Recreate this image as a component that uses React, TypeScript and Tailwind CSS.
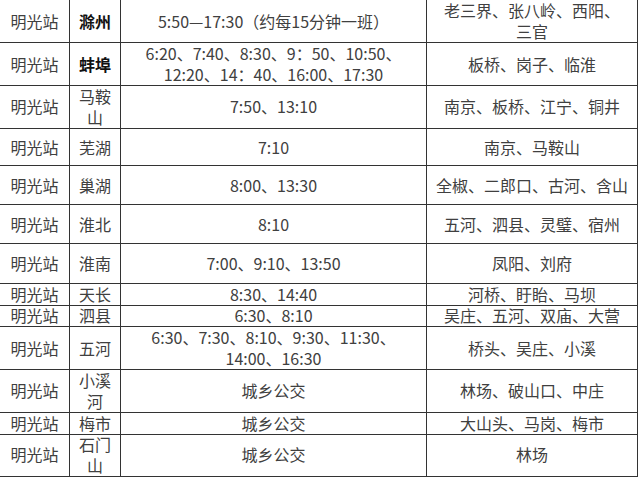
import React from "react";

type Row = {
  h: number;
  dest: React.ReactNode;
  bold?: boolean;
  times: React.ReactNode;
  stops: React.ReactNode;
};

const rows: Row[] = [
  {
    h: 43,
    dest: "滁州",
    bold: true,
    times: "5:50—17:30（约每15分钟一班）",
    stops: (
      <>
        老三界、张八岭、西阳、
        <br />
        三官
      </>
    ),
  },
  {
    h: 42,
    dest: "蚌埠",
    bold: true,
    times: (
      <>
        6:20、7:40、8:30、9：50、10:50、
        <br />
        12:20、14：40、16:00、17:30
      </>
    ),
    stops: "板桥、岗子、临淮",
  },
  {
    h: 44,
    dest: (
      <>
        马鞍
        <br />山
      </>
    ),
    times: "7:50、13:10",
    stops: "南京、板桥、江宁、铜井",
  },
  { h: 37, dest: "芜湖", times: "7:10", stops: "南京、马鞍山" },
  { h: 39, dest: "巢湖", times: "8:00、13:30", stops: "全椒、二郎口、古河、含山" },
  { h: 39, dest: "淮北", times: "8:10", stops: "五河、泗县、灵璧、宿州" },
  { h: 40, dest: "淮南", times: "7:00、9:10、13:50", stops: "凤阳、刘府" },
  { h: 21, dest: "天长", times: "8:30、14:40", stops: "河桥、盱眙、马坝" },
  { h: 22, dest: "泗县", times: "6:30、8:10", stops: "吴庄、五河、双庙、大营" },
  {
    h: 42,
    dest: "五河",
    times: (
      <>
        6:30、7:30、8:10、9:30、11:30、
        <br />
        14:00、16:30
      </>
    ),
    stops: "桥头、吴庄、小溪",
  },
  {
    h: 44,
    dest: (
      <>
        小溪
        <br />河
      </>
    ),
    times: "城乡公交",
    stops: "林场、破山口、中庄",
  },
  { h: 20, dest: "梅市", times: "城乡公交", stops: "大山头、马岗、梅市" },
  {
    h: 44,
    dest: (
      <>
        石门
        <br />山
      </>
    ),
    times: "城乡公交",
    stops: "林场",
  },
];

const cell =
  "flex items-center justify-center text-center border-r border-b border-[#333] whitespace-nowrap overflow-visible";

export default function App() {
  return (
    <div className="w-[640px] h-[481px] bg-white overflow-hidden font-['Noto_Sans_CJK_SC',sans-serif] text-[16px] leading-[21px] text-[#404040]">
      <div className="flex flex-col">
        {rows.map((r, i) => (
          <div
            key={i}
            className="grid grid-cols-[70px_51px_306px_211px]"
            style={{ height: r.h }}
          >
            <div className={cell}>明光站</div>
            <div
              className={
                cell + (r.bold ? " font-bold text-[#111]" : "")
              }
            >
              <div>{r.dest}</div>
            </div>
            <div className={cell}>
              <div>{r.times}</div>
            </div>
            <div className={cell}>
              <div>{r.stops}</div>
            </div>
          </div>
        ))}
      </div>
    </div>
  );
}
